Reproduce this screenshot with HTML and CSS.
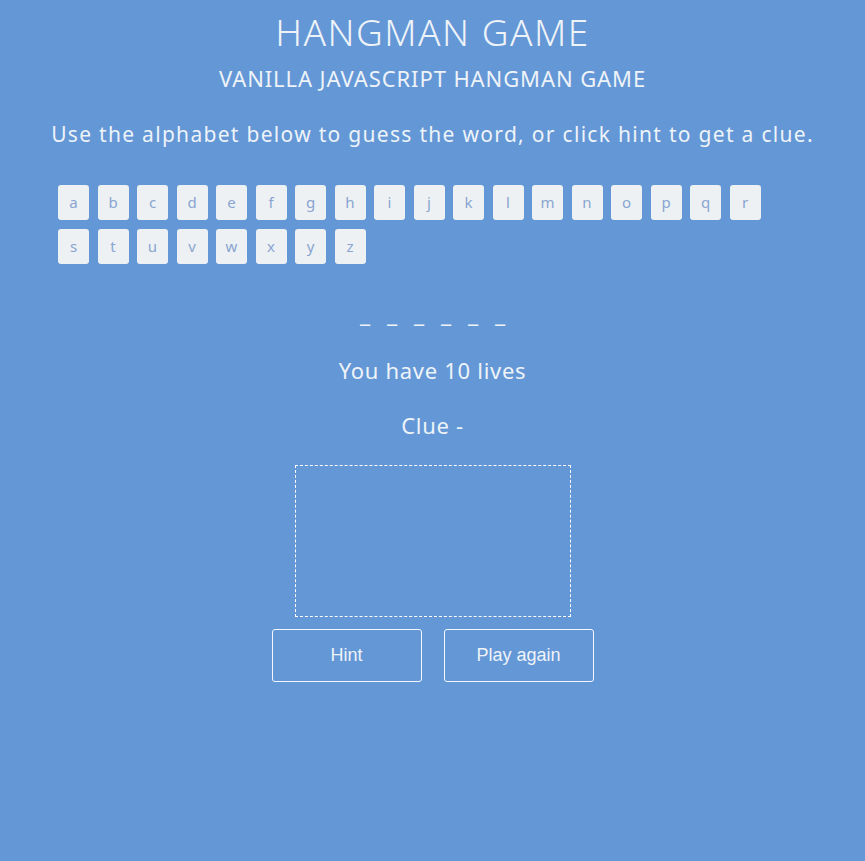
FILE: index.html
```html
<!DOCTYPE html>
<html>
<head>
<meta charset="utf-8">
<title>Hangman</title>
<link rel="stylesheet" href="styles.css">
</head>
<body>
<div class="wrapper">
  <h1 class="title">HANGMAN GAME</h1>
  <h2 class="subtitle">VANILLA JAVASCRIPT HANGMAN GAME</h2>
  <p class="intro">Use the alphabet below to guess the word, or click hint to get a clue.</p>
  <div class="buttons">
    <ul class="alphabet">
      <li>a</li><li>b</li><li>c</li><li>d</li><li>e</li><li>f</li><li>g</li><li>h</li><li>i</li><li>j</li><li>k</li><li>l</li><li>m</li><li>n</li><li>o</li><li>p</li><li>q</li><li>r</li><li>s</li><li>t</li><li>u</li><li>v</li><li>w</li><li>x</li><li>y</li><li>z</li>
    </ul>
  </div>
  <ul class="word">
    <li>_</li><li>_</li><li>_</li><li>_</li><li>_</li><li>_</li>
  </ul>
  <p class="lives">You have 10 lives</p>
  <p class="clue">Clue -</p>
  <div class="stickman"></div>
  <div class="controls">
    <button class="ctl">Hint</button>
    <button class="ctl">Play again</button>
  </div>
</div>
</body>
</html>
```
FILE: styles.css
```css
html, body {
  margin: 0;
  padding: 0;
  background: #6397d6;
  height: 100%;
}
body {
  font-family: "Noto Sans", "Open Sans", sans-serif;
  color: #eef3f8;
}
.wrapper {
  text-align: center;
  padding-top: 10px;
}
.title {
  margin: 0;
  font-size: 37px;
  font-weight: 300;
  line-height: 44px;
  letter-spacing: 1.5px;
}
.subtitle {
  margin: 8.5px 0 0;
  font-size: 22px;
  font-weight: 400;
  line-height: 30px;
  letter-spacing: 0.9px;
}
.intro {
  margin: 26.4px 0 0;
  font-size: 21px;
  line-height: 30px;
  letter-spacing: 1.3px;
}
.buttons {
  padding: 36px 58px 0;
}
.alphabet {
  list-style: none;
  margin: 0;
  padding: 0;
  max-width: 720px;
  display: flex;
  flex-wrap: wrap;
  column-gap: 8.5px;
  row-gap: 9px;
}
.alphabet li {
  width: 31px;
  height: 35px;
  line-height: 35px;
  background: #edf1f4;
  border-radius: 3px;
  color: #89a5d0;
  font-size: 15px;
  text-align: center;
}
.word {
  list-style: none;
  margin: 35.2px 0 0;
  padding: 0;
  display: flex;
  justify-content: center;
  gap: 15px;
  font-size: 24px;
  font-weight: 600;
  line-height: 28px;
}
.word li {
  width: 12px;
}
.lives {
  margin: 27.5px 0 0;
  font-size: 22px;
  line-height: 30px;
  letter-spacing: 0.7px;
}
.clue {
  margin: 25px 0 0;
  font-size: 22px;
  line-height: 30px;
  letter-spacing: 0.7px;
}
.stickman {
  width: 274px;
  height: 150px;
  border: 1px dashed #ffffff;
  margin: 25.5px auto 0;
}
.controls {
  display: flex;
  justify-content: center;
  gap: 22px;
  margin-top: 12px;
}
.ctl {
  width: 150px;
  height: 53px;
  background: transparent;
  border: 1px solid #f4f7fb;
  border-radius: 3px;
  color: #eef3f8;
  font-family: "Liberation Sans", Arial, sans-serif;
  font-size: 18px;
  padding: 0;
}
```
